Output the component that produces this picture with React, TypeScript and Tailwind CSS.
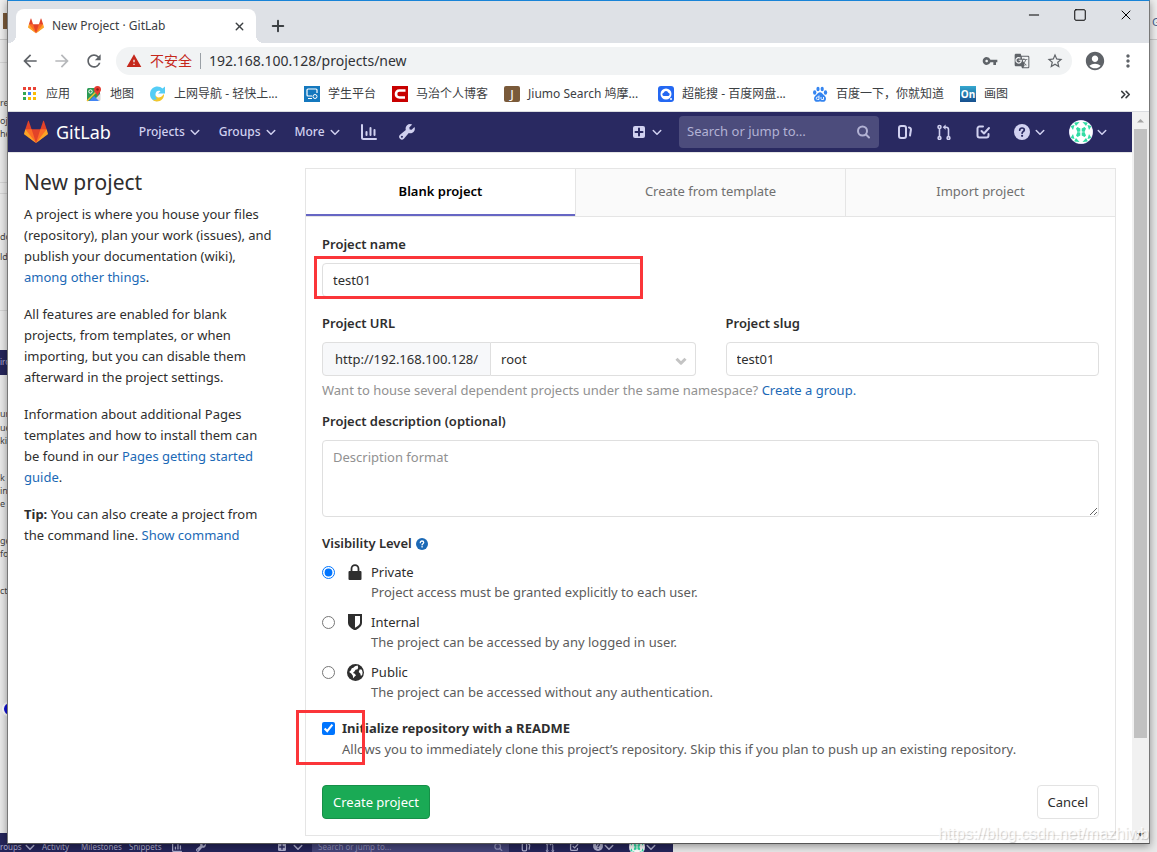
import { useState } from 'react';
import type { ReactNode } from 'react';
import { ChevronDown, ChevronsRight, Minus, Plus, Square, X } from 'lucide-react';
import { MdAccountCircle, MdArrowBack, MdArrowForward, MdGTranslate, MdMoreVert, MdRefresh, MdStarBorder, MdVpnKey, MdWarning } from 'react-icons/md';

function Tanuki({ className }: { className: string }) {
  return (
    <svg viewBox="0 0 36 36" className={className}>
      <path fill="#e24329" d="M2 14l9.38 9v-9l-4-12.28c-.205-.632-1.176-.632-1.38 0z" />
      <path fill="#e24329" d="M34 14l-9.38 9v-9l4-12.28c.205-.632 1.176-.632 1.38 0z" />
      <path fill="#e24329" d="M18 34.38L3 14h30z" />
      <path fill="#fc6d26" d="M18 34.38L11.38 14H2l4 11z" />
      <path fill="#fc6d26" d="M18 34.38L24.62 14H34l-4 11z" />
      <path fill="#fca326" d="M2 14L.1 20.16c-.18.565 0 1.2.5 1.56l17.42 12.66z" />
      <path fill="#fca326" d="M34 14l1.9 6.16c.18.565 0 1.2-.5 1.56L18 34.38z" />
    </svg>
  );
}

function Stroke({ children, className = 'size-4' }: { children: ReactNode; className?: string }) {
  return (
    <svg viewBox="0 0 16 16" fill="none" stroke="currentColor" strokeWidth="2" strokeLinecap="round" strokeLinejoin="round" className={className}>
      {children}
    </svg>
  );
}

function Caret({ className = '' }: { className?: string }) {
  return <Stroke className={`size-3 ${className}`}><path d="M3 6l5 5 5-5" /></Stroke>;
}

function ChartIcon({ className }: { className?: string }) {
  return <Stroke className={className}><path d="M1 1v12.500a1.500 1.500 0 0 0 1.500 1.500H15M5.500 8v3M9.500 4v7M13.500 6v5" /></Stroke>;
}

function WrenchIcon({ className = 'size-4' }: { className?: string }) {
  return (
    <svg viewBox="0 0 16 16" fill="currentColor" className={className}>
      <path fillRule="evenodd" d="M13.200.6L10.300 3.500l.4 1.900 1.900.4L15.500 2.900c.7 1.700.4 3.600-1 5-1.300 1.300-3.100 1.600-4.700 1.100l-4.900 5.700a2.700 2.700 0 0 1-3.900-3.900l5.800-4.900c-.5-1.600-.2-3.300 1-4.500 1.500-1.400 3.600-1.700 5.400-.8zM3.500 13.600a1 1 0 1 0-1.400-1.400 1 1 0 0 0 1.400 1.400z" />
    </svg>
  );
}

function PlusSquareIcon({ className = 'size-3' }: { className?: string }) {
  return (
    <svg viewBox="0 0 12 12" className={className}>
      <rect width="12" height="12" rx="2" fill="currentColor" />
      <path d="M6 2.500v7M2.500 6h7" stroke="#292961" strokeWidth="2" strokeLinecap="round" />
    </svg>
  );
}

function SearchIcon({ className }: { className?: string }) {
  return <Stroke className={className}><circle cx="7.500" cy="7" r="4.500" /><path d="M11 10.500l3 3" /></Stroke>;
}

function IssuesIcon({ className }: { className?: string }) {
  return <Stroke className={className}><rect x="2" y="2" width="7" height="12" rx="2" /><path d="M12 3.500c1.500.2 2.200 1 1.900 2.500l-.9 5.500" /></Stroke>;
}

function MergeIcon({ className }: { className?: string }) {
  return (
    <svg viewBox="0 0 16 16" fill="none" stroke="currentColor" strokeWidth="1.600" className={className ?? 'size-4'}>
      <circle cx="3.500" cy="3" r="1.500" /><circle cx="3.500" cy="14" r="1.400" /><circle cx="12.500" cy="14" r="1.400" />
      <path d="M3.500 4.500v8M12.500 12.500V5.500c0-1.500-.8-2.300-2.300-2.300H8.500" />
      <path d="M9.600.600v5.200L6.700 3.200z" fill="currentColor" stroke="none" />
    </svg>
  );
}

function TodoIcon({ className }: { className?: string }) {
  return <Stroke className={className}><path d="M8 2.500H4.500a2 2 0 0 0-2 2v7a2 2 0 0 0 2 2h7a2 2 0 0 0 2-2V10" /><path d="M6.500 7l2.500 2.500L14 4" /></Stroke>;
}

function HelpIcon({ className, mark }: { className: string; mark: string }) {
  return (
    <svg viewBox="0 0 16 16" className={className}>
      <circle cx="8" cy="8" r="8" fill="currentColor" />
      <path d="M5.700 6.200c0-1.400 1-2.200 2.300-2.200s2.300.8 2.300 2c0 1.500-2.200 1.600-2.200 3.200" fill="none" stroke={mark} strokeWidth="1.700" strokeLinecap="round" />
      <circle cx="8.100" cy="11.800" r="1.100" fill={mark} />
    </svg>
  );
}

function Avatar({ className }: { className: string }) {
  return (
    <svg viewBox="0 0 24 24" className={className}>
      <clipPath id="avatar-clip"><circle cx="12" cy="12" r="11.500" /></clipPath>
      <circle cx="12" cy="12" r="12" fill="#d1d1f0" />
      <g clipPath="url(#avatar-clip)">
        <path fill="#fff" d="M0 0h24v24H0z" />
        <g fill="#30dca4">
          <path d="M7 8.500L8.500 7l2.800 1.500v3l-2.800.5zM17 8.500L15.500 7l-2.800 1.500v3l2.800.5zM7 15.500L8.500 17l2.800-1.500v-3L8.500 12zM17 15.500L15.500 17l-2.800-1.500v-3l2.800-.5z" />
          <path d="M5 2.500L10.500 2 7 6zM19 2.500L13.500 2 17 6zM5 21.500l5.500.5L7 18zM19 21.500l-5.500.5 3.500-4zM1.500 6l4-1-1.500 5zM22.500 6l-4-1 1.500 5zM1.500 18l4 1L4 14zM22.500 18l-4 1 1.500-5z" />
        </g>
      </g>
    </svg>
  );
}

const bookmarks: { label: string; icon: ReactNode; wide?: boolean }[] = [
  {
    label: '应用',
    icon: (
      <svg viewBox="0 0 16 16" className="size-4">
        {['#ea4335', '#ea4335', '#ea4335', '#34a853', '#4285f4', '#fbbc05', '#34a853', '#fbbc05', '#fbbc05'].map((fill, i) => (
          <rect key={i} x={1 + (i % 3) * 5} y={1 + Math.floor(i / 3) * 5} width="3" height="3" fill={fill} />
        ))}
      </svg>
    )
  },
  {
    label: '地图',
    icon: (
      <svg viewBox="0 0 16 16" className="size-4">
        <rect x="1" y="2" width="13" height="13" rx="1.500" fill="#2c9a55" />
        <path d="M14 8L7 15h6a1.500 1.500 0 0 0 1.500-1.500V7z" fill="#d9d9d9" />
        <path d="M1 15L12 4" stroke="#fbc02d" strokeWidth="1.500" />
        <path d="M3 15l5-5 5 5z" fill="#4285f4" />
        <circle cx="4.500" cy="5.500" r="1.700" fill="none" stroke="#fff" />
        <path d="M11.500 0a3.500 3.500 0 0 1 3.500 3.500c0 2.500-2.800 3.500-3.500 7-.7-3.500-3.500-4.500-3.500-7A3.500 3.500 0 0 1 11.500 0z" fill="#e53b30" />
        <circle cx="11.500" cy="3.500" r="1.200" fill="#8c1d18" />
      </svg>
    )
  },
  {
    label: '上网导航 - 轻快上...',
    wide: true,
    icon: (
      <svg viewBox="0 0 16 16" className="size-4">
        <path d="M15 .5v7H8l2.500-2.300C7.500 4 5.500 6 5.500 8.500s2 4.500 5.500 4.500c-2 2.500-6 3-8.500.8C-.8 11-.8 5 2.500 2.200 5.500-.3 10-.2 12.500 2.500z" fill="#55cdf6" />
        <path d="M5.500 8.500c0 3 4.500 5 8.500-.5.500 4-3 7.500-7 7.500-2 0-3.500-.7-4.500-2 1.500.5 3.500.3 4.500-.5-1-.8-1.800-2.500-1.500-4.500z" fill="#f3c62b" />
      </svg>
    )
  },
  {
    label: '学生平台',
    icon: (
      <svg viewBox="0 0 16 16" className="size-4">
        <path fill="#1478be" d="M0 0h16v16H0z" />
        <path d="M8 10H4a1 1 0 0 1-1-1V4a1 1 0 0 1 1-1h8a1 1 0 0 1 1 1v3M4 12.500h4" fill="none" stroke="#fff" strokeWidth="1.200" />
        <circle cx="11" cy="10.500" r="2" fill="none" stroke="#fff" />
      </svg>
    )
  },
  {
    label: '马治个人博客',
    icon: (
      <svg viewBox="0 0 16 16" className="size-4">
        <path fill="#c80000" d="M0 0h16v16H0z" />
        <path d="M13.500 4.500H7.500C5 4.500 4 6 4 8s1 3.500 3.500 3.500h5.500" fill="none" stroke="#fff" strokeWidth="2.600" />
      </svg>
    )
  },
  {
    label: 'Jiumo Search 鸠摩...',
    wide: true,
    icon: <span className="grid size-4 place-items-center rounded-xs bg-[#7a5a3a] text-[13px] leading-4 text-white">J</span>
  },
  {
    label: '超能搜 - 百度网盘...',
    wide: true,
    icon: (
      <svg viewBox="0 0 16 16" className="size-4">
        <rect width="16" height="16" rx="3" fill="#2468f2" />
        <circle cx="8" cy="8" r="5.500" fill="#fff" />
        <path d="M5.500 10a1.700 1.700 0 0 1 .2-3.300 2.400 2.400 0 0 1 4.600 0 1.700 1.700 0 0 1 .2 3.300z" fill="#2468f2" />
        <circle cx="13" cy="13" r="1" fill="#fff" />
      </svg>
    )
  },
  {
    label: '百度一下，你就知道',
    icon: (
      <svg viewBox="0 0 16 16" className="size-4">
        <g fill="#3585f0">
          <ellipse cx="2.700" cy="6.500" rx="1.700" ry="2.200" />
          <ellipse cx="6" cy="3" rx="1.600" ry="2.300" />
          <ellipse cx="10.200" cy="3" rx="1.600" ry="2.300" />
          <ellipse cx="13.500" cy="6.500" rx="1.700" ry="2.200" />
          <path d="M8 6.200c1.600 0 2.300 1.200 3.300 2.300 1.100 1.200 2.700 2 2.700 4.200 0 1.900-1.300 3.100-3 3.100-1.200 0-1.800-.3-3-.3s-1.800.3-3 .3c-1.700 0-3-1.200-3-3.100 0-2.200 1.600-3 2.700-4.200 1-1.100 1.700-2.300 3.300-2.300z" />
        </g>
        <path d="M7 9.500v4H5.500a1.200 1.200 0 0 1 0-2.500H7M9 11v1.500a1 1 0 0 0 1 1h1.500V11" fill="none" stroke="#fff" strokeWidth=".9" />
      </svg>
    )
  },
  {
    label: '画图',
    icon: <span className="grid size-4 place-items-center bg-linear-to-b from-[#35a8cf] to-[#174f8e] text-[10px] leading-4 font-bold text-white">On</span>
  }
];

const visibilityLevels = [
  {
    id: 'private',
    title: 'Private',
    text: 'Project access must be granted explicitly to each user.',
    icon: (
      <svg viewBox="0 0 16 16" className="size-4">
        <path d="M4.500 8V4.700a3.500 3.500 0 0 1 7 0V8" fill="none" stroke="currentColor" strokeWidth="1.800" />
        <rect x="1.500" y="7" width="13" height="9" rx="1" fill="currentColor" />
      </svg>
    )
  },
  {
    id: 'internal',
    title: 'Internal',
    text: 'The project can be accessed by any logged in user.',
    icon: (
      <svg viewBox="0 0 16 16" className="size-4">
        <path fillRule="evenodd" d="M1 0h14v9c0 3-3 5.500-7 7.500C4 14.500 1 12 1 9zM8 2v11.800c3-1.600 5-3.300 5-5V2z" fill="currentColor" />
      </svg>
    )
  },
  {
    id: 'public',
    title: 'Public',
    text: 'The project can be accessed without any authentication.',
    icon: (
      <svg viewBox="0 0 16 16" className="size-[17px] shrink-0">
        <circle cx="8" cy="8" r="8" fill="currentColor" />
        <path d="M10 1.500L7.500 2 6 3.500 4.500 4l-1 2L2 7.500l2 1.500 1.500 2 .3 2.500L7 12l1.500-1.500L7 9l-1.500-.5L7 7l1-1.500 2-.5.5-2zM12 5l2 .5.7 2.500-.5 2.500-1.200.5-.5-2-1.500-1.500z" fill="#fff" />
      </svg>
    )
  }
];

// Fragments of the page behind the browser window, visible left of its frame
const fragments = [
  { text: 're', top: 'top-[97px]' }, { text: 'oje', top: 'top-[115px]' }, { text: 'he', top: 'top-[128px]' },
  { text: 'do', top: 'top-[231px]' }, { text: 'ld', top: 'top-[251px]' }, { text: 'ur', top: 'top-[408px]' },
  { text: 'ue', top: 'top-[422px]' }, { text: 'ki)', top: 'top-[435px]' }, { text: 'k p', top: 'top-[472px]' },
  { text: 'ing', top: 'top-[485px]' }, { text: 'e', top: 'top-[498px]' }, { text: 'ge', top: 'top-[535px]' },
  { text: 'fou', top: 'top-[548px]' }, { text: 'ct', top: 'top-[585px]' }
];

function Backdrop() {
  return (
    <div aria-hidden="true" className="absolute inset-0 overflow-hidden bg-[#e9e9e9] text-[9px] leading-3 text-[#444]">
      <div className="absolute top-0 h-10 w-full border-b border-[#c8c8c8] bg-[#eee]" />
      <div className="absolute top-[13px] left-[3px] h-4 w-2 bg-[#7a5a3a]" />
      <div className="absolute top-[62px] h-[121px] w-2 border-y border-[#d4d4d4]" />
      <div className="absolute top-[193px] h-[118px] w-2 border-y border-[#d4d4d4]" />
      {fragments.map((f) => <span key={f.top} className={`absolute left-0 whitespace-nowrap ${f.top}`}>{f.text}</span>)}
      <div className="absolute top-[350px] h-[25px] w-[7px] bg-[#25255a] pt-1.5 text-[8px] text-[#b6b6d6]">irou</div>
      <div className="absolute top-[701px] left-[2px] size-4 rounded-full border-2 border-white bg-[#1010d8]" />
      <span className="absolute top-4 right-0 w-[5px] text-[11px] text-[#3b5b8c]">G</span>
      <div className="absolute top-[833px] left-0 flex h-7 w-[673px] items-center bg-[#25255a] text-[8px] text-[#b0b0d0]">
        <span className="flex w-[42px] items-center">roups <Caret className="ml-0.5" /></span>
        <span className="w-[39px]">Activity</span>
        <span className="w-12">Milestones</span>
        <span className="w-[43px]">Snippets</span>
        <ChartIcon className="mr-3.5 size-2.5" />
        <WrenchIcon className="mr-[72px] size-2.5" />
        <PlusSquareIcon className="mr-1.5 size-2" />
        <Caret className="mr-2" />
        <div className="flex h-full flex-1 items-center justify-between bg-[#45457a] px-1.5 text-[8px] text-[#8f8fb8]">
          Search or jump to...
          <SearchIcon className="size-2.5" />
        </div>
        <div className="flex items-center gap-3.5 pr-4 pl-3">
          <IssuesIcon className="size-2.5" />
          <MergeIcon className="size-2.5" />
          <TodoIcon className="size-2.5" />
          <span className="flex"><HelpIcon className="size-2.5" mark="#25255a" /><Caret /></span>
          <span className="flex items-center"><Avatar className="size-4" /><Caret /></span>
        </div>
      </div>
    </div>
  );
}

function BrowserChrome() {
  return (
    <header className="text-[#3c4043]">
      <div className="flex h-[42px] items-start bg-[#dee1e6] pl-2">
        <div className="relative mt-2 flex h-[34px] w-60 items-center rounded-t-lg bg-white pr-2.5 pl-3 text-[12px]">
          <span className="absolute bottom-0 -left-2 size-2 bg-[radial-gradient(circle_at_0_0,#dee1e6_8px,white_8px)]" />
          <span className="absolute -right-2 bottom-0 size-2 bg-[radial-gradient(circle_at_100%_0,#dee1e6_8px,white_8px)]" />
          <Tanuki className="mr-2 size-4" />
          New Project · GitLab
          <button aria-label="Close tab" className="ml-auto"><X size={13} strokeWidth={2.5} /></button>
        </div>
        <button aria-label="New tab" className="mt-4 ml-[13px]"><Plus size={18} strokeWidth={2.6} /></button>
        <div className="mt-1.5 mr-[15px] ml-auto flex items-center gap-[31px] text-black">
          <button aria-label="Minimize"><Minus size={16} strokeWidth={1.5} /></button>
          <button aria-label="Maximize"><Square size={14} strokeWidth={1.7} /></button>
          <button aria-label="Close"><X size={16} strokeWidth={1.5} /></button>
        </div>
      </div>
      <div className="flex h-9 items-center pr-[11px] pb-px pl-3 text-[#5f6368]">
        <button aria-label="Back"><MdArrowBack size={20} /></button>
        <button aria-label="Forward" className="ml-3 text-[#b6b8bb]"><MdArrowForward size={20} /></button>
        <button aria-label="Reload" className="ml-3"><MdRefresh size={20} /></button>
        <div className="ml-3 flex h-7 min-w-0 flex-1 items-center rounded-full bg-[#f1f3f4] pr-2 pl-2.5">
          <MdWarning size={16} className="mr-2 text-[#c5281c]" />
          <span className="text-[14px] text-[#c5281c]">不安全</span>
          <span className="mx-2 h-4 w-px bg-[#9aa0a6]" />
          <input aria-label="Address" defaultValue="192.168.100.128/projects/new" className="min-w-0 flex-1 bg-transparent text-[14px] text-[#303236] outline-none" />
          <div className="flex items-center gap-4">
            <MdVpnKey size={16} />
            <MdGTranslate size={16} />
            <MdStarBorder size={18} />
          </div>
        </div>
        <button aria-label="Profile" className="ml-3"><MdAccountCircle size={22} /></button>
        <button aria-label="Menu" className="ml-3"><MdMoreVert size={20} /></button>
      </div>
      <nav className="flex h-[33px] items-center gap-4 overflow-hidden border-b border-[#dadce0] pr-4 pb-0.5 pl-3.5 text-[12px] whitespace-nowrap">
        {bookmarks.map((b) => (
          <a key={b.label} href="#" className="flex shrink-0 items-center gap-2">
            {b.icon}
            <span className={b.wide ? 'w-[114px]' : ''}>{b.label}</span>
          </a>
        ))}
        <button aria-label="More bookmarks" className="ml-auto"><ChevronsRight size={15} strokeWidth={2.6} /></button>
      </nav>
    </header>
  );
}

function Navbar() {
  return (
    <nav className="flex h-10 items-center bg-[#292961] px-4 text-[#d1d1f0]">
      <a href="#" className="flex items-center text-[18px] text-white">
        <Tanuki className="mr-2 size-6" />
        GitLab
      </a>
      <div className="ml-7 flex items-center gap-[18px] text-[12px] font-medium">
        {['Projects', 'Groups', 'More'].map((item) => (
          <button key={item} className="flex items-center gap-1">{item}<Caret /></button>
        ))}
      </div>
      <a href="#" aria-label="Analytics" className="ml-5"><ChartIcon /></a>
      <a href="#" aria-label="Admin area" className="ml-[22px]"><WrenchIcon /></a>
      <button aria-label="New" className="ml-auto flex items-center gap-1.5"><PlusSquareIcon /><Caret /></button>
      <div className="ml-4 flex h-8 w-[200px] items-center rounded bg-[#4c4c7c] px-2">
        <input aria-label="Search" placeholder="Search or jump to…" className="min-w-0 flex-1 bg-transparent text-[13px] outline-none placeholder:text-[#b2b2d4]" />
        <SearchIcon className="size-4 text-[#b2b2d4]" />
      </div>
      <div className="ml-[18px] flex items-center gap-[23px]">
        <a href="#" aria-label="Issues"><IssuesIcon /></a>
        <a href="#" aria-label="Merge requests"><MergeIcon /></a>
        <a href="#" aria-label="To-Do List"><TodoIcon /></a>
        <button aria-label="Help" className="flex items-center gap-1"><HelpIcon className="size-4" mark="#292961" /><Caret /></button>
        <button aria-label="User menu" className="mr-2 flex items-center gap-[3px]"><Avatar className="size-6" /><Caret /></button>
      </div>
    </nav>
  );
}

function Sidebar() {
  const link = 'text-[#1b69b6]';
  return (
    <aside className="w-1/4 px-4 leading-[21px]">
      <h1 className="mb-2 text-[21px] leading-7">New project</h1>
      <p className="mb-4">A project is where you house your files (repository), plan your work (issues), and publish your documentation (wiki), <a href="#" className={link}>among other things</a>.</p>
      <p className="mb-4">All features are enabled for blank projects, from templates, or when importing, but you can disable them afterward in the project settings.</p>
      <p className="mb-4">Information about additional Pages templates and how to install them can be found in our <a href="#" className={link}>Pages getting started guide</a>.</p>
      <p><strong>Tip:</strong> You can also create a project from the command line. <a href="#" className={link}>Show command</a></p>
    </aside>
  );
}

function ProjectForm() {
  const [level, setLevel] = useState('private');
  const label = 'mb-2 block font-semibold';
  const field = 'h-[34px] rounded border border-[#dfdfdf] bg-white px-2.5 outline-none';
  return (
    <form className="px-4 pt-[17px] pb-4 leading-[21px]" onSubmit={(e) => e.preventDefault()}>
      <label htmlFor="name" className={label}>Project name</label>
      <div className="relative mb-4 w-[321px]">
        <input id="name" defaultValue="test01" className={`${field} w-full`} />
        <div className="pointer-events-none absolute -top-[7px] right-0 -bottom-0.5 -left-2 border-3 border-[#fb3539]" />
      </div>
      <div className="flex gap-[30px]">
        <div className="min-w-0 flex-1">
          <label htmlFor="namespace" className={label}>Project URL</label>
          <div className="flex">
            <span className="flex h-[34px] items-center rounded-l border border-[#dfdfdf] bg-[#f7f8fa] px-3">http://192.168.100.128/</span>
            <div className="relative min-w-0 flex-1">
              <select id="namespace" className="h-[34px] w-full appearance-none rounded-r border border-l-0 border-[#dfdfdf] bg-white px-2.5 outline-none">
                <option>root</option>
              </select>
              <ChevronDown size={18} strokeWidth={4} strokeLinecap="butt" className="pointer-events-none absolute top-2.5 right-1.5 text-[#c4c4c4]" />
            </div>
          </div>
        </div>
        <div className="min-w-0 flex-1">
          <label htmlFor="slug" className={label}>Project slug</label>
          <input id="slug" defaultValue="test01" className={`${field} w-full`} />
        </div>
      </div>
      <p className="mt-1 mb-2.5 text-[#919191]">Want to house several dependent projects under the same namespace? <a href="#" className="text-[#1b69b6]">Create a group.</a></p>
      <label htmlFor="description" className={label}>Project description (optional)</label>
      <textarea id="description" placeholder="Description format" className="mb-4 block h-[77px] w-full rounded border border-[#dfdfdf] px-2.5 py-1.5 outline-none placeholder:text-[#919191]" />
      <fieldset>
        <legend className="mb-2 flex items-center gap-1 font-semibold">
          Visibility Level <HelpIcon className="size-3 text-[#1b69b6]" mark="#fff" />
        </legend>
        {visibilityLevels.map((v) => (
          <label key={v.id} className="mb-2.5 flex leading-5">
            <input type="radio" name="visibility" checked={level === v.id} onChange={() => setLevel(v.id)} className="mt-1 mr-3 size-[13px]" />
            <span className="mt-0.5 mr-2 flex w-4 justify-center">{v.icon}</span>
            <span>
              <span className="block">{v.title}</span>
              <span className="block text-[#5c5c5c]">{v.text}</span>
            </span>
          </label>
        ))}
      </fieldset>
      <div className="relative mt-1.5 mb-[25px] flex items-start">
        <input id="readme" type="checkbox" defaultChecked className="mt-1 mr-[7px] size-[13px]" />
        <label htmlFor="readme">
          <span className="block font-bold">Initialize repository with a README</span>
          <span className="block text-[#5c5c5c]">Allows you to immediately clone this project’s repository. Skip this if you plan to push up an existing repository.</span>
        </label>
        <div className="pointer-events-none absolute -top-2 -left-[26px] h-[55px] w-[69px] border-3 border-[#fb3539]" />
      </div>
      <div className="flex justify-between">
        <button type="submit" className="h-[34px] rounded border border-[#168f48] bg-[#1aaa55] px-2.5 text-white">Create project</button>
        <button type="button" className="h-[34px] rounded border border-[#e3e3e3] bg-white px-2.5">Cancel</button>
      </div>
    </form>
  );
}

export default function App() {
  const tabs = ['Blank project', 'Create from template', 'Import project'];
  return (
    <div className="relative min-h-screen overflow-hidden pr-[7px] pb-2 pl-[7px] font-['Noto_Sans','Noto_Sans_CJK_SC',sans-serif] text-[13px] text-[#2e2e2e]">
      <Backdrop />
      <div className="relative flex min-h-[calc(100vh-8px)] flex-col border border-t-[#1883d7] border-r-[#777] border-b-[#555] border-l-[#777] bg-white shadow-[0_2px_8px_#0006]">
        <BrowserChrome />
        <div className="flex flex-1">
          <div className="min-w-0 flex-1">
            <Navbar />
            <main className="flex border-t border-[#e5e5e5] pt-[15px]">
              <Sidebar />
              <section className="w-3/4 px-4">
                <div className="border border-[#e5e5e5]">
                  <div role="tablist" className="flex h-12 border-b border-[#e5e5e5]">
                    {tabs.map((tab, i) => (
                      <button
                        key={tab}
                        role="tab"
                        aria-selected={i === 0}
                        className={`flex-1 ${i === 0 ? 'border-b-2 border-[#6666c4] font-semibold text-black' : 'border-l border-[#e5e5e5] bg-[#fafafa] pb-0.5 text-[#707070]'}`}
                      >
                        {tab}
                      </button>
                    ))}
                  </div>
                  <ProjectForm />
                </div>
              </section>
            </main>
          </div>
          <div aria-hidden="true" className="flex w-[17px] flex-col items-center bg-[#f1f1f1]">
            <svg viewBox="0 0 17 17" className="size-[17px]"><path d="M5 10.500L8.500 7l3.500 3.500z" fill="#a3a3a3" /></svg>
            <div className="w-[13px] flex-1 bg-[#c1c1c1]" />
            <div className="h-[88px]" />
            <svg viewBox="0 0 17 17" className="size-[17px]"><path d="M5 7l3.500 3.500L12 7z" fill="#505050" /></svg>
          </div>
        </div>
      </div>
      <div className="pointer-events-none absolute right-2 bottom-2 font-['Liberation_Sans',sans-serif] text-[16px] leading-5 text-white/80 [text-shadow:1px_1px_1px_#0003]">https://blog.csdn.net/mazhiwb</div>
    </div>
  );
}
